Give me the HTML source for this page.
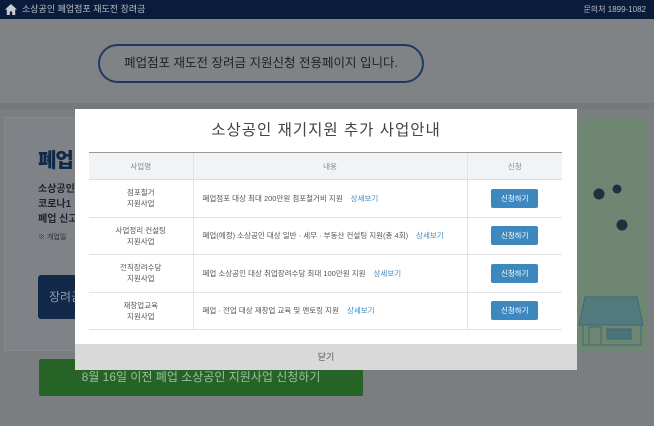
<!DOCTYPE html>
<html><head><meta charset="utf-8"><style>
*{margin:0;padding:0;box-sizing:border-box}
body{width:654px;height:426px;overflow:hidden;position:relative;background:#7b7e81;font-family:"Liberation Sans","Noto Sans CJK KR",sans-serif}
.abs{position:absolute}
.top{left:0;top:0;width:654px;height:19px;background:#0a1c3c;color:#b8bcc4;font-size:9px;line-height:19px}
.banner{left:0;top:19px;width:654px;height:84px;background:#808386}
.pill{left:98px;top:44px;width:326px;height:39px;border:2px solid #1f3960;border-radius:20px;text-align:center;line-height:35px;font-size:12.5px;color:#1e2126;white-space:nowrap}
.strip{left:0;top:103px;width:654px;height:6px;background:#76797c}
.lp{left:4px;top:117px;width:72px;height:234px;background:#7f8286;border:1px solid #888b8f}
.rp{left:577px;top:117px;width:70px;height:234px;background:#6f8672;overflow:hidden}
.modal{left:75px;top:109px;width:502px;height:261px;background:#fff}
table{position:absolute;left:14px;top:43px;width:473px;border-collapse:collapse;font-size:7.5px;color:#555}
th{background:#f1f3f6;height:27px;font-weight:normal;color:#888;border-top:1px solid #999;border-bottom:1px solid #ddd}
td{height:37.5px;border-bottom:1px solid #e3e3e3;text-align:center;line-height:11px}
th+th,td+td{border-left:1px solid #e3e3e3}
td.c{text-align:left;padding-left:9px;white-space:nowrap}
.lk{color:#3d88bf;margin-left:8px}
.btn{display:inline-block;width:47px;height:19px;background:#3d88bf;color:#fff;line-height:19px;border-radius:2px;font-size:7.5px}
.foot{left:0;top:235px;width:502px;height:26px;background:#d9d9d9;text-align:center;line-height:26px;font-size:9px;color:#555}
</style></head><body>
<div class="abs top"><svg class="abs" style="left:5px;top:4px" width="12" height="11" viewBox="0 0 12 11"><path d="M6 0L0 5.5H1.8V11H4.8V7.5H7.2V11H10.2V5.5H12Z" fill="#c8ccd4"/></svg><span class="abs" style="left:22px">소상공인 폐업점포 재도전 장려금</span><span class="abs" style="right:8px;font-size:8px">문의처 1899-1082</span></div>
<div class="abs banner"></div>
<div class="abs pill">폐업점포 재도전 장려금 지원신청 전용페이지 입니다.</div>
<div class="abs strip"></div>
<div class="abs lp"></div>
<div class="abs" style="left:38px;top:144px;font-size:20px;font-weight:900;color:#0f2a48;letter-spacing:-1px">폐업</div>
<div class="abs" style="left:38px;top:182px;font-size:10px;line-height:15px;color:#1c2430;font-weight:bold">소상공인<br>코로나1<br>폐업 신고</div>
<div class="abs" style="left:38px;top:232px;font-size:7px;color:#2a3038">※ 개업일</div>
<div class="abs" style="left:38px;top:275px;width:40px;height:44px;background:#13294a;border-radius:3px;color:#8e9aac;font-size:12px;line-height:44px;padding-left:11px;white-space:nowrap;overflow:hidden">장려금</div>
<div class="abs rp">
<svg width="70" height="234" viewBox="0 0 70 234"><g fill="#1d3040"><circle cx="22" cy="77" r="5.5"/><circle cx="40" cy="72" r="4.5"/><circle cx="45" cy="108" r="5.5"/></g><g fill="none" stroke="#3a6c74" stroke-width="1"><path d="M2 208L8 180H60L66 208Z" fill="#527a7e"/><rect x="6" y="208" width="58" height="20"/><rect x="12" y="210" width="12" height="18"/><rect x="30" y="212" width="24" height="10" fill="#4a747a"/></g></svg></div>
<div class="abs" style="left:39px;top:359px;width:324px;height:37px;background:#266327;border-radius:2px;color:#9fbf9f;font-size:12px;text-align:center;line-height:37px">8월 16일 이전 폐업 소상공인 지원사업 신청하기</div>
<div class="abs modal">
<div class="abs" style="left:0;top:9px;width:502px;text-align:center;font-size:15.5px;color:#444;letter-spacing:1px">소상공인 재기지원 추가 사업안내</div>
<table>
<tr><th style="width:104px">사업명</th><th>내용</th><th style="width:95px">신청</th></tr>
<tr><td>점포철거<br>지원사업</td><td class="c">폐업점포 대상 최대 200만원 점포철거비 지원<span class="lk">상세보기</span></td><td><span class="btn">신청하기</span></td></tr>
<tr><td>사업정리 컨설팅<br>지원사업</td><td class="c">폐업(예정) 소상공인 대상 일반 · 세무 · 부동산 컨설팅 지원(총 4회)<span class="lk">상세보기</span></td><td><span class="btn">신청하기</span></td></tr>
<tr><td>전직장려수당<br>지원사업</td><td class="c">폐업 소상공인 대상 취업장려수당 최대 100만원 지원<span class="lk">상세보기</span></td><td><span class="btn">신청하기</span></td></tr>
<tr><td>재창업교육<br>지원사업</td><td class="c">폐업 · 전업 대상 재창업 교육 및 멘토링 지원<span class="lk">상세보기</span></td><td><span class="btn">신청하기</span></td></tr>
</table>
<div class="abs foot">닫기</div>
</div>
</body></html>
